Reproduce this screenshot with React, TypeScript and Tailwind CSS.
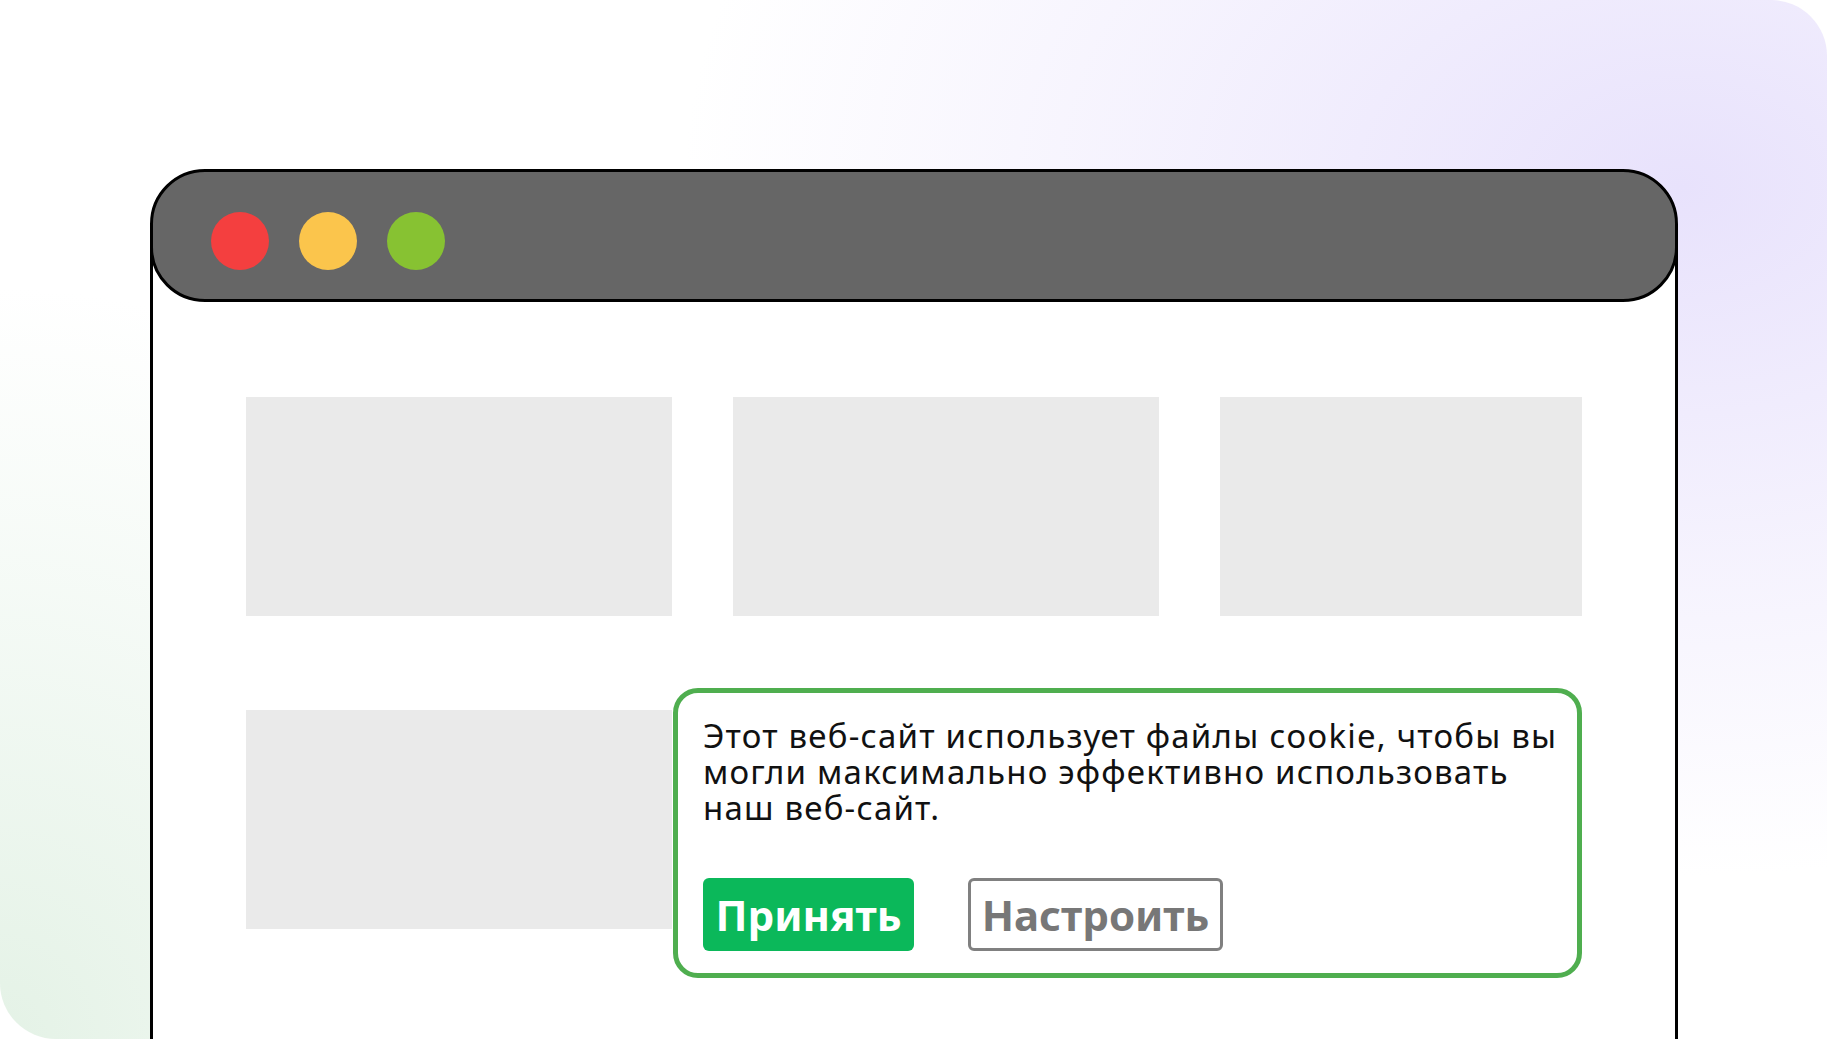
export default function App() {
  return (
    <div className="w-full h-screen bg-white">
      <div
        className="w-full h-[1039px] overflow-hidden rounded-[56px] pt-[169px] pl-[150px] pr-[149px] bg-[radial-gradient(ellipse_70%_85%_at_92%_18%,#e8e2fc_0%,rgba(240,236,253,0.6)_45%,rgba(255,255,255,0)_78%),radial-gradient(ellipse_45%_85%_at_0%_100%,#e4f2e6_0%,rgba(236,246,238,0.55)_50%,rgba(255,255,255,0)_85%),linear-gradient(#ffffff,#ffffff)]"
        style={{ fontFamily: '"Noto Sans", "Open Sans", sans-serif' }}
      >
        <div className="flex flex-col">
          {/* title bar */}
          <div className="relative z-10 h-[133px] rounded-[55px] border-[3px] border-black bg-[#666666] flex items-start gap-[30px] pl-[58px] pt-[40px]">
            <span className="w-[58px] h-[58px] rounded-full bg-[#f43f3f]" />
            <span className="w-[58px] h-[58px] rounded-full bg-[#fbc54c]" />
            <span className="w-[58px] h-[58px] rounded-full bg-[#87c232]" />
          </div>

          {/* page body */}
          <div className="relative -mt-[67px] h-[900px] border-x-[3px] border-black bg-white pt-[162px] px-[93px]">
            <div className="grid grid-cols-[426px_426px_1fr] auto-rows-[219px] gap-x-[61px] gap-y-[94px]">
              <div className="bg-[#eaeaea]" />
              <div className="bg-[#eaeaea]" />
              <div className="bg-[#eaeaea]" />
              <div className="bg-[#eaeaea]" />
              <div className="bg-[#eaeaea]" />
              <div className="bg-[#eaeaea]" />
            </div>

            {/* cookie banner */}
            <div className="absolute left-[520px] top-[453px] w-[909px] h-[290px] rounded-[25px] border-[5px] border-[#4fae4f] bg-white pt-[25px] pl-[25px] pr-[6px]">
              <p className="text-[33px] leading-[36px] text-[#111111] tracking-[1.2px]">
                Этот веб-сайт использует файлы cookie, чтобы вы могли максимально эффективно использовать наш веб-сайт.
              </p>
              <div className="mt-[52px] flex items-start gap-[54px]">
                <button className="w-[211px] h-[73px] rounded-[6px] bg-[#0bb85a] text-white text-[42px] font-bold leading-none flex items-center justify-center">
                  Принять
                </button>
                <button className="w-[255px] h-[73px] rounded-[6px] border-[3px] border-[#808080] bg-white text-[#777777] text-[42px] font-bold leading-none flex items-center justify-center">
                  Настроить
                </button>
              </div>
            </div>
          </div>
        </div>
      </div>
    </div>
  );
}
